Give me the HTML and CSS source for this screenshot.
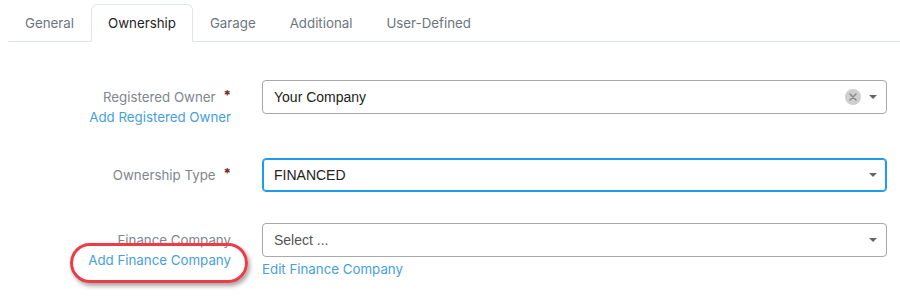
FILE: index.html
```html
<!DOCTYPE html>
<html lang="en">
<head>
  <meta charset="UTF-8" />
  <meta name="viewport" content="width=device-width, initial-scale=1.0" />
  <title>Vehicle - Ownership</title>
  <link rel="stylesheet" href="styles.css">
</head>
<body>
  <ul class="tabs">
    <li class="tab">General</li>
    <li class="tab active">Ownership</li>
    <li class="tab">Garage</li>
    <li class="tab">Additional</li>
    <li class="tab">User-Defined</li>
  </ul>

  <div class="formulario">
    <div class="fila">
      <div class="etiqueta">
        <div>Registered Owner<span class="req">*</span></div>
        <a class="enlace" href="#">Add Registered Owner</a>
      </div>
      <div class="campo">
        <div class="select">
          <span class="valor">Your Company</span>
          <span class="limpiar">
            <svg width="16" height="16" viewBox="0 0 16 16"><circle cx="8" cy="8" r="8" fill="#cfcfcf"/><path d="M5 5l6 6M11 5l-6 6" stroke="#8a8a8a" stroke-width="1.5" stroke-linecap="round"/></svg>
          </span>
          <span class="flecha"></span>
        </div>
      </div>
    </div>

    <div class="fila">
      <div class="etiqueta">
        <div>Ownership Type<span class="req">*</span></div>
      </div>
      <div class="campo">
        <div class="select foco">
          <span class="valor">FINANCED</span>
          <span class="flecha"></span>
        </div>
      </div>
    </div>

    <div class="fila">
      <div class="etiqueta marcada">
        <div>Finance Company</div>
        <a class="enlace" href="#">Add Finance Company</a>
        <span class="ovalo"></span>
      </div>
      <div class="campo">
        <div class="select">
          <span class="valor vacio">Select ...</span>
          <span class="flecha"></span>
        </div>
        <a class="enlace debajo" href="#">Edit Finance Company</a>
      </div>
    </div>
  </div>
</body>
</html>
```

FILE: styles.css
```css
:root {
  --borde-tab: #dfe4ea;
  --gris-texto: #6c757d;
  --azul-enlace: #47a0e0;
  --azul-foco: #1d9bf0;
}

* {
  box-sizing: border-box;
  margin: 0;
  padding: 0;
}

html, body {
  min-height: 100vh;
}

body {
  font-family: "Inter", "Liberation Sans", sans-serif;
  font-size: 13.3px;
  line-height: 20px;
  color: #212529;
  background: #fff;
  padding-top: 4px;
}

.tabs {
  list-style: none;
  display: flex;
  margin-left: 8px;
  border-bottom: 1px solid var(--borde-tab);
}

.tab {
  padding: 8px 16px;
  border: 1px solid transparent;
  border-top-left-radius: 6px;
  border-top-right-radius: 6px;
  margin-bottom: -1px;
  color: var(--gris-texto);
}

.tab.active {
  color: #1f2328;
  background: #fff;
  border-color: var(--borde-tab) var(--borde-tab) #fff;
}

.formulario {
  padding-top: 38px;
  display: flex;
  flex-direction: column;
  gap: 31px;
}

.fila {
  display: grid;
  grid-template-columns: 231px 625px;
  column-gap: 31px;
}

.etiqueta {
  text-align: right;
  padding-top: 7px;
  color: #80868d;
  position: relative;
}

.req {
  color: #7a1d2a;
  font-weight: 700;
  margin-left: 8px;
  position: relative;
  top: -2px;
}

.enlace {
  display: block;
  color: var(--azul-enlace);
  text-decoration: none;
}

.enlace.debajo {
  margin-top: 2px;
}

.select {
  height: 34px;
  border: 1px solid #a9a9a9;
  border-radius: 4px;
  display: flex;
  align-items: center;
  padding: 0 9px 0 11px;
  font-family: "Liberation Sans", Arial, sans-serif;
  font-size: 14px;
  color: #222;
}

.select.foco {
  border-color: var(--azul-foco);
  box-shadow: inset 0 0 0 1px var(--azul-foco);
}

.valor {
  flex: 1;
}

.valor.vacio {
  color: #555;
}

.limpiar {
  display: flex;
  margin-right: 8px;
}

.flecha {
  width: 0;
  height: 0;
  border-left: 4px solid transparent;
  border-right: 4px solid transparent;
  border-top: 4px solid #666;
}

.ovalo {
  position: absolute;
  left: 70px;
  top: 20px;
  width: 178px;
  height: 40px;
  border: 3px solid #ee3c47;
  border-radius: 20px;
  box-shadow: 2px 3px 4px rgba(0, 0, 0, 0.35);
}
```
